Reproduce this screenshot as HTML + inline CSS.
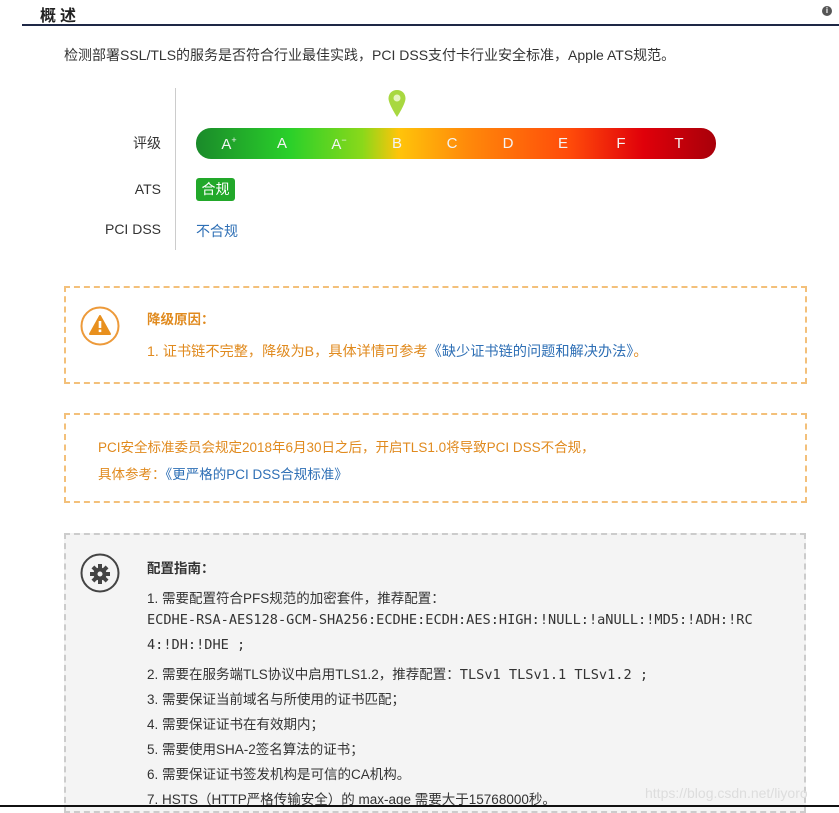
<!DOCTYPE html>
<html><head><meta charset="utf-8"><style>
*{margin:0;padding:0;box-sizing:border-box}
body{width:839px;height:807px;overflow:hidden;background:#fff;position:relative;font-family:"Liberation Sans","Noto Sans CJK SC",sans-serif;color:#333}
.a{position:absolute;white-space:nowrap}
.lbl{position:absolute;right:678px;font-size:14px;color:#333;text-align:right}
.bar{position:absolute;left:196px;top:128px;width:520px;height:31px;border-radius:15px;background:linear-gradient(90deg,#1a8a2a 0%,#2ad02a 18%,#8ad81a 32%,#ffc40a 39%,#ff8a0a 52%,#ff4a0a 72%,#e0000a 86%,#a8000a 100%)}
.bar span{position:absolute;top:7px;font-size:15px;color:#f4f4f4;transform:translateX(-50%)}
.box{position:absolute;left:64px;width:743px;border:2px dashed #f3c07a}
.or{color:#e08a1e;font-size:13.5px}
.bl{color:#2e6fb5}
.g{font-size:13.5px;color:#333}
.mono{font-family:"DejaVu Sans Mono","Liberation Mono",monospace;font-size:13.6px}
</style></head><body>
<div class="a" style="left:40px;top:2px;font-size:16px;font-weight:bold;letter-spacing:4px;color:#222">概述</div>
<div class="a" style="left:822px;top:6px;width:10px;height:10px;border-radius:50%;background:#555;color:#fff;font-size:8px;font-weight:bold;text-align:center;line-height:10px">i</div>
<div class="a" style="left:22px;top:24px;width:817px;height:2px;background:#1e2846"></div>
<div class="a" style="left:64px;top:45px;font-size:14px;color:#333">检测部署SSL/TLS的服务是否符合行业最佳实践，PCI DSS支付卡行业安全标准，Apple ATS规范。</div>
<div class="a" style="left:175px;top:88px;width:1px;height:162px;background:#ccc"></div>
<div class="lbl" style="top:133px">评级</div>
<div class="lbl" style="top:181px">ATS</div>
<div class="lbl" style="top:221px">PCI DSS</div>
<svg class="a" style="left:386px;top:88px" width="22" height="32" viewBox="0 0 22 32"><path d="M11 2C6 2 2.5 5.5 2.5 10.5 2.5 16 11 29 11 29S19.5 16 19.5 10.5C19.5 5.5 16 2 11 2Z" fill="#a8d840"/><circle cx="11" cy="10" r="3.5" fill="#e6f5c0"/></svg>
<div class="bar"><span style="left:33px">A<sup style="font-size:9px">+</sup></span><span style="left:86px">A</span><span style="left:143px">A<sup style="font-size:9px">−</sup></span><span style="left:201px">B</span><span style="left:256px">C</span><span style="left:312px">D</span><span style="left:367px">E</span><span style="left:425px">F</span><span style="left:483px">T</span></div>
<div class="a" style="left:196px;top:178px;width:39px;height:23px;background:#22a82a;border-radius:3px;color:#fff;font-size:14px;text-align:center;line-height:23px">合规</div>
<div class="a bl" style="left:196px;top:221px;font-size:14px">不合规</div>

<div class="box" style="top:286px;height:98px"></div>
<svg class="a" style="left:80px;top:306px" width="40" height="40" viewBox="0 0 40 40"><circle cx="20" cy="20" r="18.5" fill="none" stroke="#ed9a3a" stroke-width="2"/><path d="M20 10L30 28H10Z" fill="#e8901e" stroke="#e8901e" stroke-width="2" stroke-linejoin="round"/><rect x="18.7" y="15" width="2.6" height="7" fill="#fff"/><rect x="18.7" y="23.5" width="2.6" height="2.6" fill="#fff"/></svg>
<div class="a or" style="left:147px;top:308px;font-weight:bold">降级原因：</div>
<div class="a or" style="left:147px;top:341px;font-size:14.2px">1. 证书链不完整，降级为B，具体详情可参考<span class="bl">《缺少证书链的问题和解决办法》</span>。</div>

<div class="box" style="top:413px;height:90px"></div>
<div class="a or" style="left:98px;top:436px">PCI安全标准委员会规定2018年6月30日之后，开启TLS1.0将导致PCI DSS不合规，</div>
<div class="a or" style="left:98px;top:463px">具体参考：<span class="bl">《更严格的PCI DSS合规标准》</span></div>

<div class="a" style="left:64px;top:533px;width:742px;height:280px;border:2px dashed #ccc;background:#f4f4f4"></div>
<svg class="a" style="left:80px;top:553px" width="40" height="40" viewBox="0 0 40 40"><circle cx="20" cy="20" r="18.5" fill="none" stroke="#444" stroke-width="2"/><g fill="#444" transform="translate(20 21)"><circle r="6.5"/><g id="t"><rect x="-2" y="-10" width="4" height="5"/></g><use href="#t" transform="rotate(45)"/><use href="#t" transform="rotate(90)"/><use href="#t" transform="rotate(135)"/><use href="#t" transform="rotate(180)"/><use href="#t" transform="rotate(225)"/><use href="#t" transform="rotate(270)"/><use href="#t" transform="rotate(315)"/><circle r="2.5" fill="#f4f4f4"/></g></svg>
<div class="a g" style="left:147px;top:557px;font-weight:bold">配置指南：</div>
<div class="a g" style="left:147px;top:587px">1. 需要配置符合PFS规范的加密套件，推荐配置：</div>
<div class="a g mono" style="left:147px;top:612px">ECDHE-RSA-AES128-GCM-SHA256:ECDHE:ECDH:AES:HIGH:!NULL:!aNULL:!MD5:!ADH:!RC</div>
<div class="a g mono" style="left:147px;top:637px">4:!DH:!DHE ;</div>
<div class="a g" style="left:147px;top:663px">2. 需要在服务端TLS协议中启用TLS1.2，推荐配置：<span class="mono">TLSv1 TLSv1.1 TLSv1.2 ;</span></div>
<div class="a g" style="left:147px;top:688px">3. 需要保证当前域名与所使用的证书匹配；</div>
<div class="a g" style="left:147px;top:713px">4. 需要保证证书在有效期内；</div>
<div class="a g" style="left:147px;top:738px">5. 需要使用SHA-2签名算法的证书；</div>
<div class="a g" style="left:147px;top:763px">6. 需要保证证书签发机构是可信的CA机构。</div>
<div class="a g" style="left:147px;top:788px">7. HSTS（HTTP严格传输安全）的 max-age 需要大于15768000秒。</div>
<div class="a" style="left:645px;top:785px;font-size:14px;color:#ddd">https://blog.csdn.net/liyoro</div>
<div class="a" style="left:0;top:805px;width:839px;height:2px;background:#111"></div>
</body></html>
